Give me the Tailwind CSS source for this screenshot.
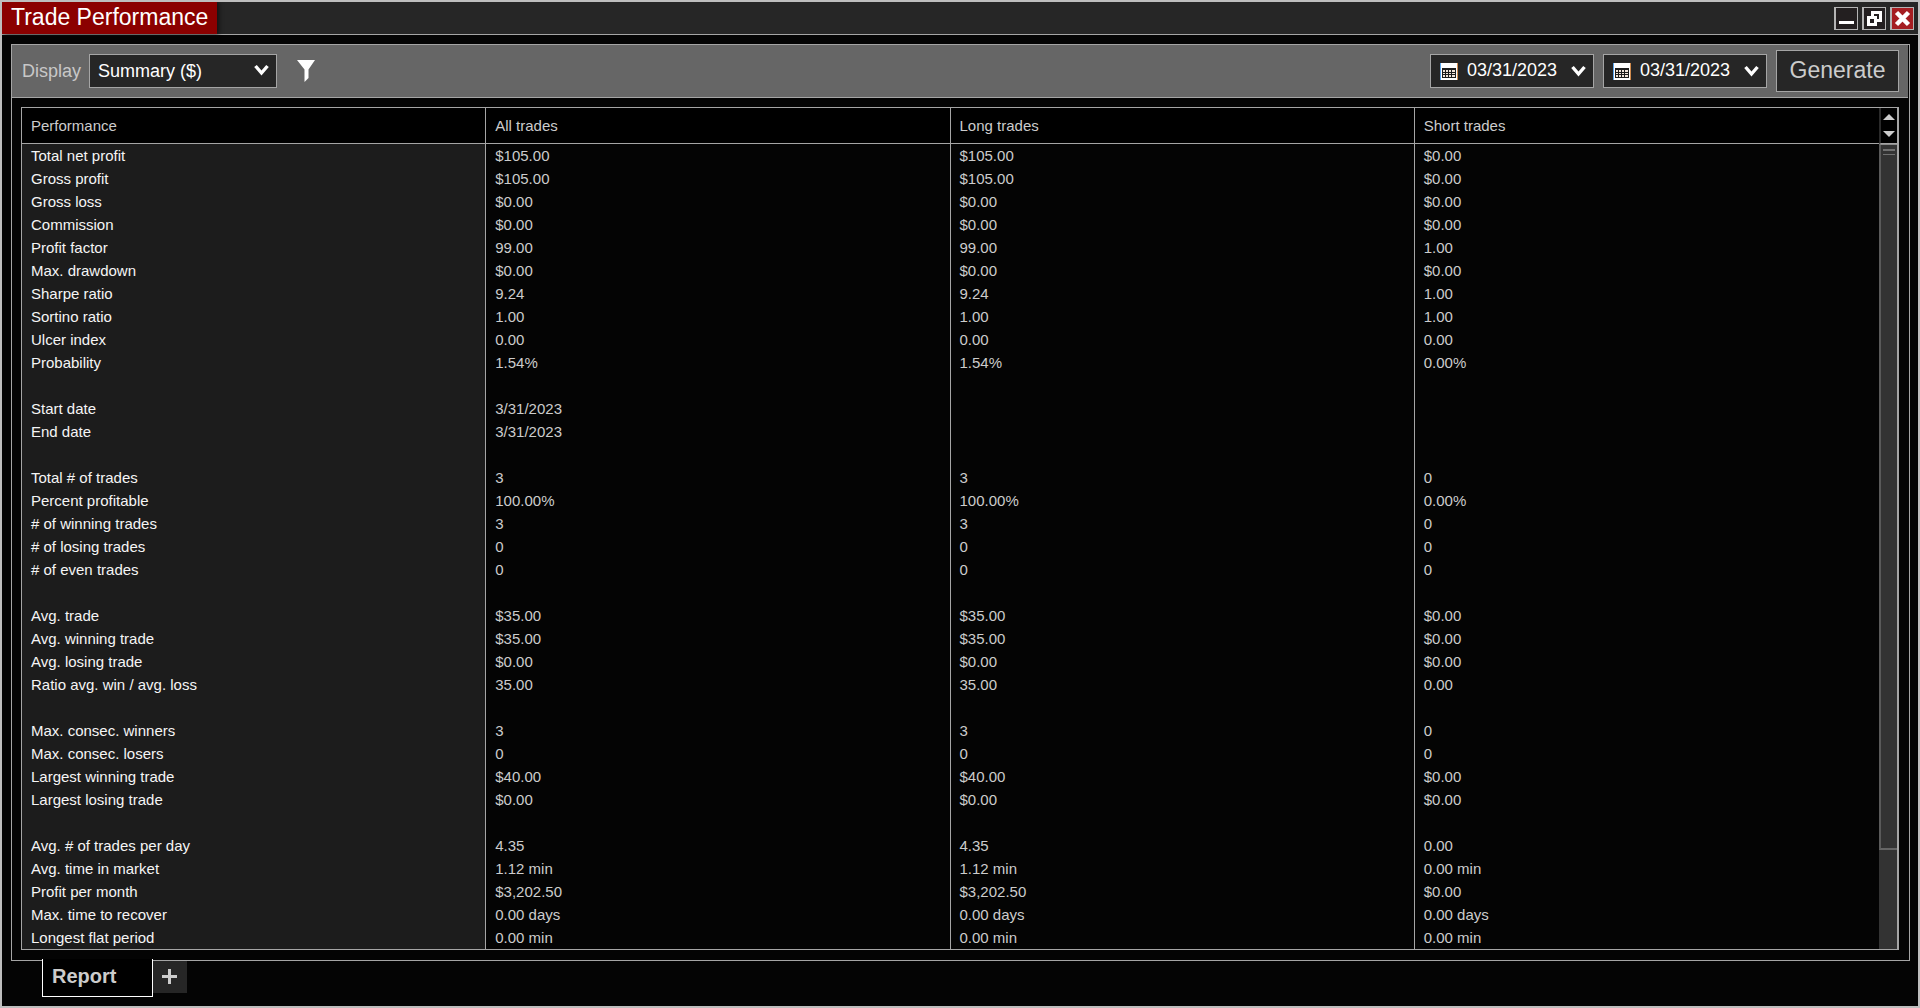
<!DOCTYPE html>
<html lang="en">
<head>
    <meta charset="UTF-8">
    <meta name="viewport" content="width=device-width, initial-scale=1.0">
    <title>Trade Performance</title>

    <!-- Tailwind CSS -->
    <script src="https://cdn.jsdelivr.net/npm/@tailwindcss/browser@4"></script>
</head>
<body class="h-screen flex flex-col overflow-hidden border-2 border-[#bebebe] bg-[#040404] font-['Liberation_Sans',Arial,sans-serif] text-[#cccccc]">

    <!-- Title bar -->
    <header class="h-[33px] shrink-0 flex items-center justify-between border-b border-[#a5a5a5] bg-[#262626]">
        <h1 class="h-full flex items-center pl-[9px] pr-[9px] pb-0.5 bg-[#8b0000] text-white text-[23px] leading-none shadow-[2px_0_4px_#111]">Trade Performance</h1>
        <div class="flex gap-1 pr-1 pt-px">
            <button type="button" aria-label="Minimize" class="w-6 h-[23px] border border-l-2 border-[#b4b4b4] bg-[#231f20]">
                <svg class="block" width="21" height="21" viewBox="0 0 21 21"><path d="M3 13h15v3H3z" fill="#fff"/></svg>
            </button>
            <button type="button" aria-label="Restore" class="w-6 h-[23px] border border-l-2 border-[#b4b4b4] bg-[#231f20]">
                <svg class="block" width="21" height="21" viewBox="0 0 21 21" fill="none" stroke="#fff"><path d="M8.5 8V4.5h8v8H13" stroke-width="3"/><path d="M4.5 9.5h7v7h-7z" fill="#231f20" stroke-width="3"/></svg>
            </button>
            <button type="button" aria-label="Close" class="w-6 h-[23px] border border-l-2 border-[#b4b4b4] bg-[#a51e22]">
                <svg class="block" width="21" height="21" viewBox="0 0 21 21"><path d="M4.500 4.500l12 12M16.500 4.500l-12 12" stroke="#fff" stroke-width="4.5"/></svg>
            </button>
        </div>
    </header>

    <!-- Report panel -->
    <main class="flex-1 min-h-0 flex flex-col mt-[9px] ml-[9px] mr-2 border border-[#a5a5a5]">

        <!-- Toolbar -->
        <div class="h-[53px] shrink-0 flex items-center mr-px pl-2.5 pr-[9px] border-b border-[#a5a5a5] bg-[#666666] text-[18px]">
            <label for="display" class="text-[#c8c8c8]">Display</label>
            <div class="relative ml-2">
                <select id="display" class="block appearance-none w-[188px] h-[34px] pl-2 pr-8 border border-[#a5a5a5] bg-[#262626] text-white text-[18px]">
                    <option>Summary ($)</option>
                </select>
                <svg class="absolute right-2 top-2.5 pointer-events-none" width="15" height="12" viewBox="0 0 15 12" fill="none"><path d="M1.5 2l6 7 6-7" stroke="#fff" stroke-width="3.4"/></svg>
            </div>
            <button type="button" aria-label="Filter" class="ml-5">
                <svg class="block" width="18" height="22" viewBox="0 0 18 22"><path d="M0 0h18l-6.500 9.500v8.500L7.500 22V9.500z" fill="#fff"/></svg>
            </button>

            <div class="ml-auto flex items-center gap-[9px]">
                <div class="w-[164px] h-[34px] flex items-center pl-[9px] pr-[7px] border border-[#a5a5a5] bg-[#262626]">
                    <svg class="shrink-0" width="18" height="17" viewBox="0 0 18 17"><path d="M0 0h18v17H0z" fill="#fff"/><path d="M0 0h1v17H0z" fill="#5aa5ee"/><path d="M17 0h1v17h-1z" fill="#d08a4c"/><path d="M2 5h14v10H2z" fill="#1c1c1c"/><path d="M3 7h2v2H3zM6 7h2v2H6zM9 7h2v2H9zM12 7h3v2h-3zM3 10h2v1H3zM6 10h2v1H6zM9 10h2v1H9zM12 10h3v1h-3zM3 12h2v2H3zM6 12h2v2H6zM9 12h2v2H9zM12 12h3v2h-3z" fill="#f0e4da"/></svg>
                    <input type="text" id="startDate" aria-label="Start date" value="03/31/2023" class="min-w-0 flex-1 pl-[9px] pb-0.5 bg-transparent text-white">
                    <button type="button" aria-label="Pick start date">
                        <svg class="block" width="15" height="12" viewBox="0 0 15 12" fill="none"><path d="M1.5 2l6 7 6-7" stroke="#fff" stroke-width="3.4"/></svg>
                    </button>
                </div>
                <div class="w-[164px] h-[34px] flex items-center pl-[9px] pr-[7px] border border-[#a5a5a5] bg-[#262626]">
                    <svg class="shrink-0" width="18" height="17" viewBox="0 0 18 17"><path d="M0 0h18v17H0z" fill="#fff"/><path d="M0 0h1v17H0z" fill="#5aa5ee"/><path d="M17 0h1v17h-1z" fill="#d08a4c"/><path d="M2 5h14v10H2z" fill="#1c1c1c"/><path d="M3 7h2v2H3zM6 7h2v2H6zM9 7h2v2H9zM12 7h3v2h-3zM3 10h2v1H3zM6 10h2v1H6zM9 10h2v1H9zM12 10h3v1h-3zM3 12h2v2H3zM6 12h2v2H6zM9 12h2v2H9zM12 12h3v2h-3z" fill="#f0e4da"/></svg>
                    <input type="text" id="endDate" aria-label="End date" value="03/31/2023" class="min-w-0 flex-1 pl-[9px] pb-0.5 bg-transparent text-white">
                    <button type="button" aria-label="Pick end date">
                        <svg class="block" width="15" height="12" viewBox="0 0 15 12" fill="none"><path d="M1.5 2l6 7 6-7" stroke="#fff" stroke-width="3.4"/></svg>
                    </button>
                </div>
                <button type="button" id="generateBtn" class="w-[123px] h-[42px] pb-0.5 border border-[#a5a5a5] bg-[#262626] text-[#cccccc] text-[23px] leading-none">Generate</button>
            </div>
        </div>

        <!-- Results grid -->
        <div class="flex-1 min-h-0 flex mt-[9px] mb-2.5 ml-[9px] mr-2.5 border border-r-0 border-[#a5a5a5]">
            <div class="flex-1 min-w-0 overflow-hidden">
                <table class="w-full table-fixed border-separate border-spacing-0 text-left text-[15px]">
                    <thead>
                        <tr class="h-9 bg-black">
                            <th class="pl-[9px] pt-0.5 border-b border-r border-[#a5a5a5] font-normal">Performance</th>
                            <th class="pl-[9px] pt-0.5 border-b border-r border-[#a5a5a5] font-normal">All trades</th>
                            <th class="pl-[9px] pt-0.5 border-b border-r border-[#a5a5a5] font-normal">Long trades</th>
                            <th class="pl-[9px] pt-0.5 border-b border-[#a5a5a5] font-normal">Short trades</th>
                        </tr>
                    </thead>
                    <tbody id="rows"></tbody>
                </table>
            </div>

            <!-- Scrollbar -->
            <div class="w-5 shrink-0 flex flex-col border-r-2 border-[#a5a5a5] bg-[#333333]">
                <div class="h-9 shrink-0 flex flex-col items-center justify-center gap-[11px] border-b border-b-[#a5a5a5] border-l-2 border-l-[#2a2a2a] bg-black">
                    <button type="button" aria-label="Scroll up">
                        <svg class="block" width="12" height="6" viewBox="0 0 12 6"><path d="M6 0l6 6H0z" fill="#ccc"/></svg>
                    </button>
                    <button type="button" aria-label="Scroll down">
                        <svg class="block" width="12" height="6" viewBox="0 0 12 6"><path d="M0 0h12L6 6z" fill="#ccc"/></svg>
                    </button>
                </div>
                <div class="h-[84%] flex flex-col items-center gap-[3px] pt-1 border-t border-t-[#8c8c8c] border-l-2 border-l-[#5a5a5a] border-b-2 border-b-[#666666] bg-[#333333]">
                    <div class="w-3 h-0.5 bg-[#707070]"></div>
                    <div class="w-3 h-px bg-[#707070]"></div>
                </div>
            </div>
        </div>
    </main>

    <!-- Report tabs -->
    <nav class="h-[45px] shrink-0 flex items-start pl-10">
        <button type="button" class="relative -mt-0.5 w-[111px] h-[38px] pl-[9px] pb-1 border border-t-0 border-white bg-black text-left text-[20px] font-bold leading-none">Report</button>
        <button type="button" aria-label="Add tab" class="w-[34px] h-8 pr-px pb-px flex items-center justify-center bg-[#262626]">
            <svg width="15" height="15" viewBox="0 0 15 15"><path d="M6 0h3v6h6v3H9v6H6V9H0V6h6z" fill="#ccc"/></svg>
        </button>
    </nav>

    <script>
        // Label, all trades, long trades, short trades (empty row = spacer)
        const stats = [
            ['Total net profit', '$105.00', '$105.00', '$0.00'],
            ['Gross profit', '$105.00', '$105.00', '$0.00'],
            ['Gross loss', '$0.00', '$0.00', '$0.00'],
            ['Commission', '$0.00', '$0.00', '$0.00'],
            ['Profit factor', '99.00', '99.00', '1.00'],
            ['Max. drawdown', '$0.00', '$0.00', '$0.00'],
            ['Sharpe ratio', '9.24', '9.24', '1.00'],
            ['Sortino ratio', '1.00', '1.00', '1.00'],
            ['Ulcer index', '0.00', '0.00', '0.00'],
            ['Probability', '1.54%', '1.54%', '0.00%'],
            [],
            ['Start date', '3/31/2023'],
            ['End date', '3/31/2023'],
            [],
            ['Total # of trades', '3', '3', '0'],
            ['Percent profitable', '100.00%', '100.00%', '0.00%'],
            ['# of winning trades', '3', '3', '0'],
            ['# of losing trades', '0', '0', '0'],
            ['# of even trades', '0', '0', '0'],
            [],
            ['Avg. trade', '$35.00', '$35.00', '$0.00'],
            ['Avg. winning trade', '$35.00', '$35.00', '$0.00'],
            ['Avg. losing trade', '$0.00', '$0.00', '$0.00'],
            ['Ratio avg. win / avg. loss', '35.00', '35.00', '0.00'],
            [],
            ['Max. consec. winners', '3', '3', '0'],
            ['Max. consec. losers', '0', '0', '0'],
            ['Largest winning trade', '$40.00', '$40.00', '$0.00'],
            ['Largest losing trade', '$0.00', '$0.00', '$0.00'],
            [],
            ['Avg. # of trades per day', '4.35', '4.35', '0.00'],
            ['Avg. time in market', '1.12 min', '1.12 min', '0.00 min'],
            ['Profit per month', '$3,202.50', '$3,202.50', '$0.00'],
            ['Max. time to recover', '0.00 days', '0.00 days', '0.00 days'],
            ['Longest flat period', '0.00 min', '0.00 min', '0.00 min']
        ];

        document.getElementById('rows').innerHTML = stats.map(([label = '', all = '', long = '', short = '']) => `
            <tr class="h-[23px] leading-[23px]">
                <th scope="row" class="pl-[9px] border-r border-[#a5a5a5] bg-[#1c1c1c] font-normal text-[#f5f5f5]">${label}</th>
                <td class="pl-[9px] border-r border-[#a5a5a5]">${all}</td>
                <td class="pl-[9px] border-r border-[#a5a5a5]">${long}</td>
                <td class="pl-[9px]">${short}</td>
            </tr>`).join('');
    </script>
</body>
</html>
